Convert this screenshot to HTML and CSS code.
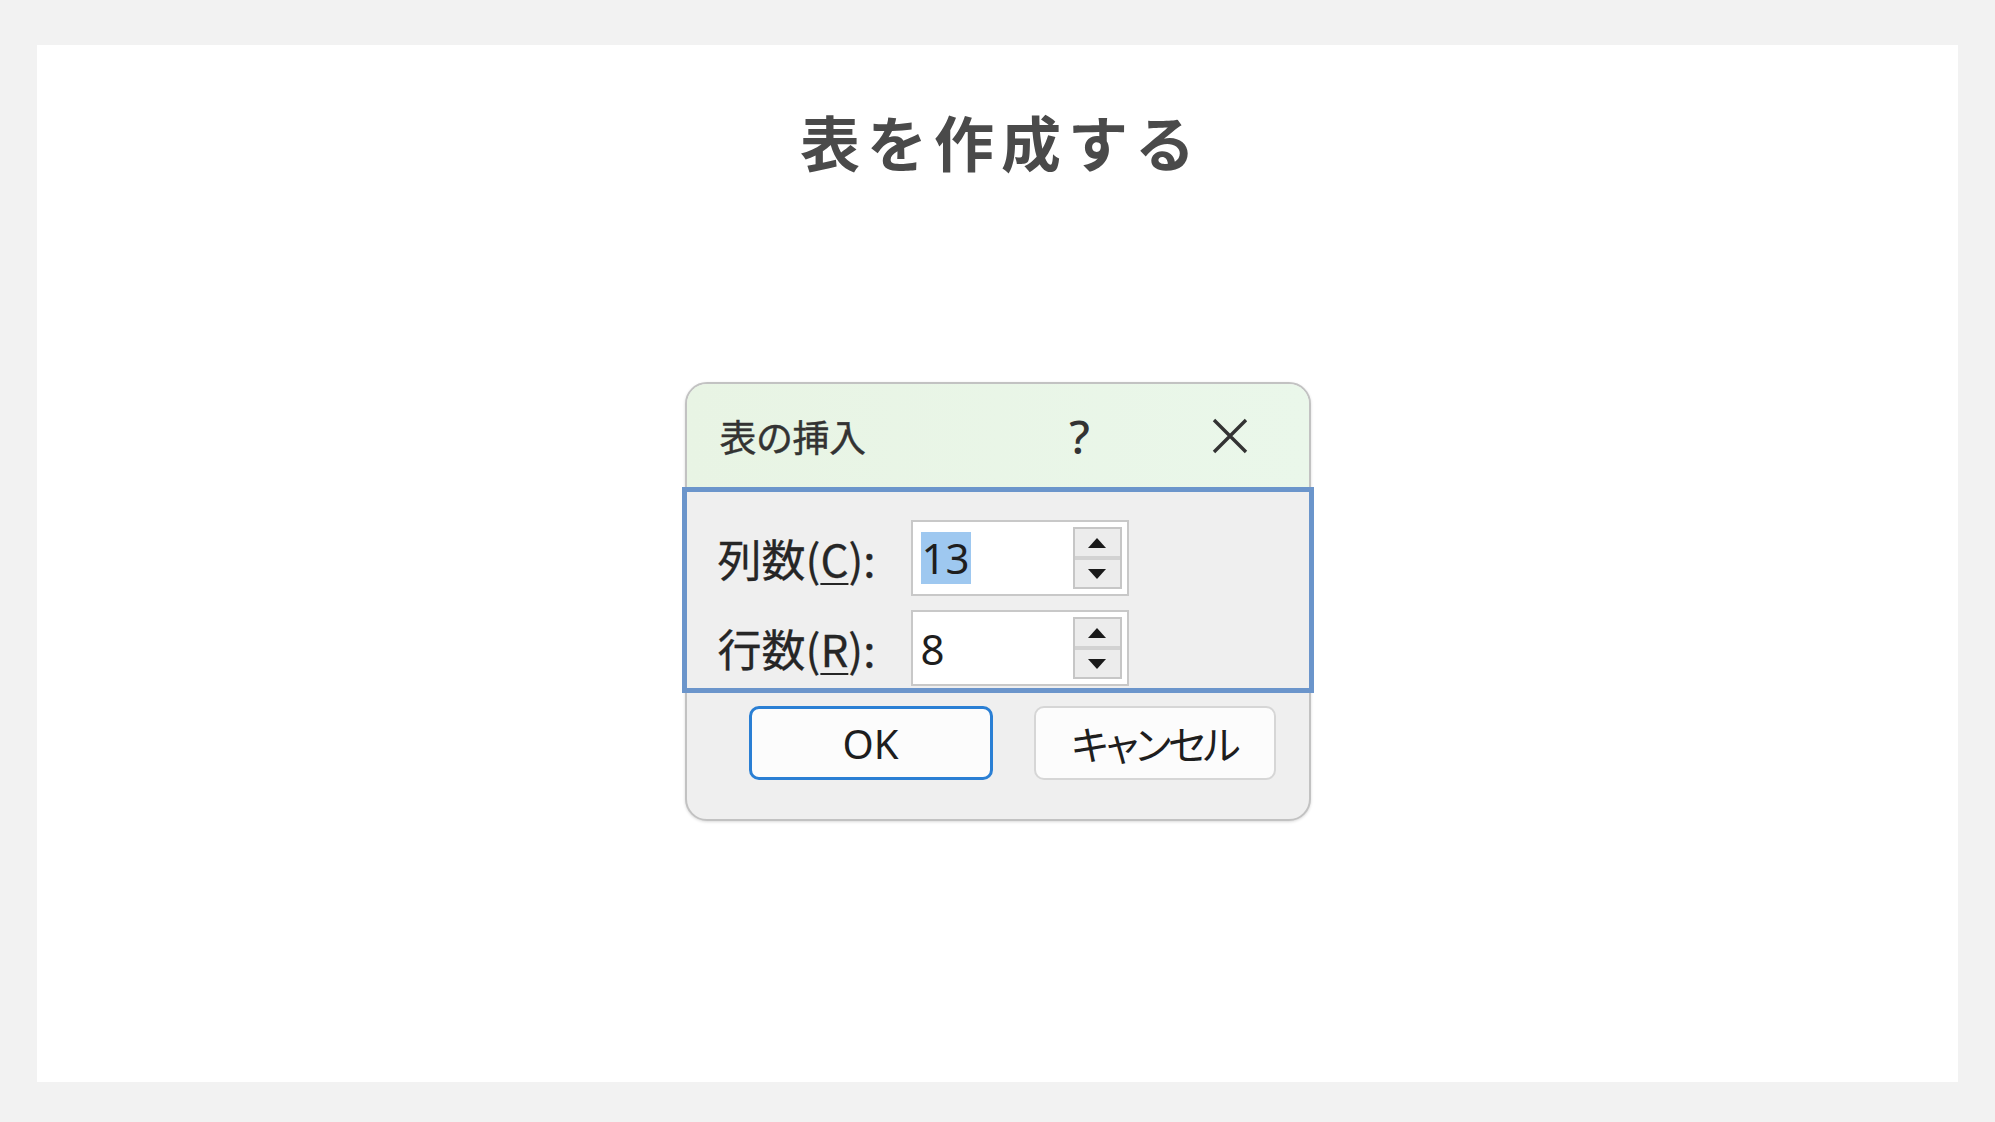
FILE: index.html
```html
<!doctype html>
<html lang="ja">
<head>
<meta charset="utf-8">
<title>表を作成する</title>
<link rel="stylesheet" href="styles.css">
</head>
<body>

<div class="card">

	<h1 class="heading">表を作成する</h1>

	<div class="dialog">

		<div class="titlebar">
			<span class="title">表の挿入</span>
			<span class="help">?</span>
			<span class="close">
				<svg width="38" height="38" viewBox="0 0 38 38">
					<path d="M3 3 L35 35 M35 3 L3 35" stroke="#333" stroke-width="3.4" fill="none"/>
				</svg>
			</span>
		</div>

		<div class="fields">
			<div class="row">
				<label class="label">列数(<u>C</u>):</label>
				<div class="spinbox">
					<div class="value"><span class="sel">13</span></div>
					<div class="spin">
						<div class="up"><i></i></div>
						<div class="down"><i></i></div>
					</div>
				</div>
			</div>
			<div class="row">
				<label class="label">行数(<u>R</u>):</label>
				<div class="spinbox">
					<div class="value">8</div>
					<div class="spin">
						<div class="up"><i></i></div>
						<div class="down"><i></i></div>
					</div>
				</div>
			</div>
		</div>

		<div class="buttons">
			<button class="btn ok">OK</button>
			<button class="btn cancel">キャンセル</button>
		</div>

	</div>

</div>

</body>
</html>
```

FILE: styles.css
```css
body {
	margin:0;
	padding:45px 37px 40px 37px;
	background:#f2f2f2;
	font-family:"Noto Sans CJK JP", "Noto Sans", sans-serif;
}

.card {
	height:1037px;
	background:#fff;
	display:flex;
	flex-direction:column;
	align-items:center;
}

.heading {
	margin:66px 0 0 7px;
	font-size:60px;
	line-height:1;
	font-weight:700;
	letter-spacing:7px;
	color:#4a4a4a;
}

/* dialog */

.dialog {
	margin-top:211px;
	width:622px;
	border:2px solid #c2c2c2;
	border-radius:22px;
	background:#efefef;
	box-shadow:0 1px 3px rgba(0,0,0,0.15);
}

.titlebar {
	display:flex;
	align-items:center;
	height:103px;
	padding-left:33px;
	border-radius:20px 20px 0 0;
	background:linear-gradient(90deg,#e8f4e4,#eaf7ea);
	color:#333;
}

.title {
	font-size:37px;
	width:345px;
	letter-spacing:-0.5px;
	-webkit-text-stroke:0.4px #333;
}

.help {
	font-family:"Noto Sans", sans-serif;
	font-size:46px;
	font-weight:500;
	width:30px;
	text-align:center;
	margin-right:116px;
}

.close {
	display:flex;
}

.fields {
	margin:0 -5px;
	height:206px;
	padding:28px 0 0 31px;
	box-sizing:border-box;
	border:5px solid #6b95cb;
	display:flex;
	flex-direction:column;
	gap:14px;
}

.row {
	display:flex;
	align-items:center;
	height:76px;
}

.label {
	width:193px;
	font-size:44px;
	color:#262626;
	font-feature-settings:"palt";
	-webkit-text-stroke:0.3px #262626;
}

.label u {
	text-decoration-thickness:2px;
	text-underline-offset:6px;
}

.spinbox {
	display:flex;
	justify-content:space-between;
	width:218px;
	height:76px;
	box-sizing:border-box;
	border:2px solid #c8c8c8;
	background:#fff;
	padding:5px 5px 5px 8px;
}

.value {
	display:flex;
	align-items:center;
	font-family:"Noto Sans", sans-serif;
	font-size:42px;
	color:#1e1e1e;
}

.sel {
	background:#9ec8f0;
	line-height:52px;
	padding:0 1px;
}

.spin {
	width:49px;
	box-sizing:border-box;
	border:2px solid #c6c6c6;
	background:#ececec;
	display:flex;
	flex-direction:column;
}

.spin div {
	flex:1;
	display:flex;
	align-items:center;
	justify-content:center;
}

.spin .up {
	border-bottom:4px solid #d2d2d2;
}

.spin .up i {
	border-left:9px solid transparent;
	border-right:9px solid transparent;
	border-bottom:10px solid #1a1a1a;
}

.spin .down i {
	border-left:9px solid transparent;
	border-right:9px solid transparent;
	border-top:10px solid #1a1a1a;
}

/* buttons */

.buttons {
	display:flex;
	gap:41px;
	padding:13px 0 39px 62px;
}

.btn {
	height:74px;
	border-radius:10px;
	background:#fcfcfc;
	font-family:"Noto Sans", "Noto Sans CJK JP", sans-serif;
	font-size:40px;
	color:#1e1e1e;
	padding:0;
}

.ok {
	width:244px;
	border:3px solid #2a7fd4;
}

.cancel {
	width:242px;
	border:2px solid #d6d6d6;
	font-feature-settings:"palt";
	letter-spacing:-3px;
}
```
